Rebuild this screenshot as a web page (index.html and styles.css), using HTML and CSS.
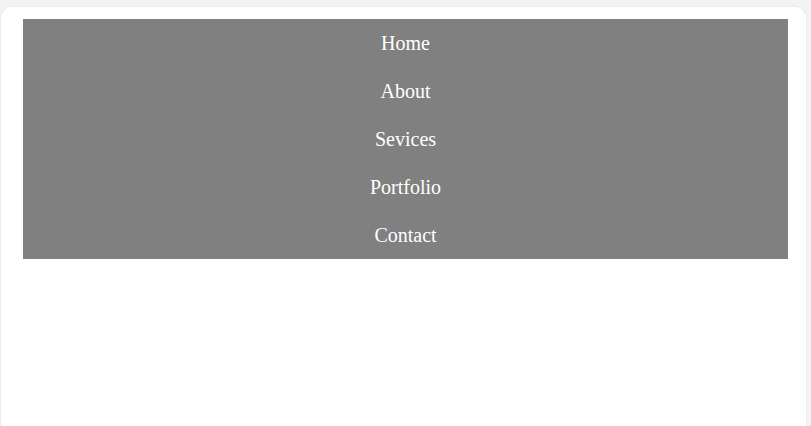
FILE: index.html
```html
<!DOCTYPE html>
<html>
<head>
<meta charset="utf-8">
<link rel="stylesheet" href="styles.css">
</head>
<body>
<div class="card">
  <ul class="nav">
    <li>Home</li>
    <li>About</li>
    <li>Sevices</li>
    <li>Portfolio</li>
    <li>Contact</li>
  </ul>
</div>
</body>
</html>
```
FILE: styles.css
```css
html, body {
  margin: 0;
  height: 100%;
}
body {
  background: #f3f3f3;
  padding: 6px 4px 0 0;
  box-sizing: border-box;
  font-family: "Liberation Serif", serif;
}
.card {
  background: #fff;
  border: 1px solid #ebebeb;
  border-bottom: none;
  border-radius: 12px 12px 0 0;
  height: 100%;
  box-sizing: border-box;
  padding: 12px 18px 0 22px;
}
.nav {
  list-style: none;
  margin: 0;
  padding: 0;
  background: #808080;
}
.nav li {
  height: 48px;
  line-height: 48px;
  text-align: center;
  color: #fff;
  font-size: 20px;
}
```
